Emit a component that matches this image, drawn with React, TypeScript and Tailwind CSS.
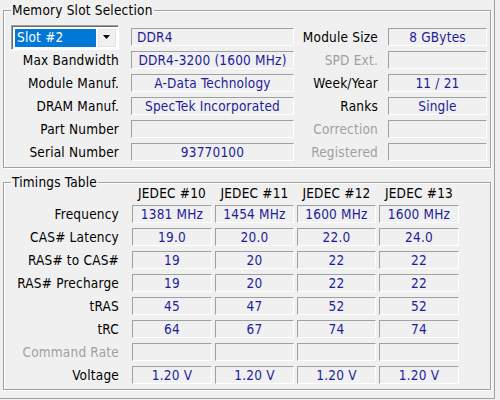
import React from "react";

const FONT = "[font-family:'DejaVu_Sans_Condensed','Liberation_Sans',sans-serif]";

type Slot = { label: string; value?: string; disabled?: boolean; align?: "left" | "center" };

const LEFT_ROWS: Slot[] = [
  { label: "", value: "DDR4", align: "left" },
  { label: "Max Bandwidth", value: "DDR4-3200 (1600 MHz)" },
  { label: "Module Manuf.", value: "A-Data Technology" },
  { label: "DRAM Manuf.", value: "SpecTek Incorporated" },
  { label: "Part Number", value: "" },
  { label: "Serial Number", value: "93770100" },
];

const RIGHT_ROWS: Slot[] = [
  { label: "Module Size", value: "8 GBytes" },
  { label: "SPD Ext.", value: "", disabled: true },
  { label: "Week/Year", value: "11 / 21" },
  { label: "Ranks", value: "Single" },
  { label: "Correction", value: "", disabled: true },
  { label: "Registered", value: "", disabled: true },
];

const COLUMNS = ["JEDEC #10", "JEDEC #11", "JEDEC #12", "JEDEC #13"];
const COL_W = ["w-[80px]", "w-[79px]", "w-[79px]", "w-[80px]"];

const TIMINGS: { label: string; values: string[]; disabled?: boolean }[] = [
  { label: "Frequency", values: ["1381 MHz", "1454 MHz", "1600 MHz", "1600 MHz"] },
  { label: "CAS# Latency", values: ["19.0", "20.0", "22.0", "24.0"] },
  { label: "RAS# to CAS#", values: ["19", "20", "22", "22"] },
  { label: "RAS# Precharge", values: ["19", "20", "22", "22"] },
  { label: "tRAS", values: ["45", "47", "52", "52"] },
  { label: "tRC", values: ["64", "67", "74", "74"] },
  { label: "Command Rate", values: ["", "", "", ""], disabled: true },
  { label: "Voltage", values: ["1.20 V", "1.20 V", "1.20 V", "1.20 V"] },
];

function Field({ value, className = "", left }: { value?: string; className?: string; left?: boolean }) {
  return (
    <div
      className={`flex h-[18px] items-center overflow-hidden whitespace-nowrap border-t border-l border-b border-r border-t-[#a0a0a0] border-l-[#a0a0a0] border-b-white border-r-white pt-[2px] text-[#1d1d9b] ${
        left ? "justify-start pl-[5px]" : "justify-center"
      } ${className}`}
    >
      {value}
    </div>
  );
}

function GroupBox({ title, className = "", children }: { title: string; className?: string; children: React.ReactNode }) {
  return (
    <div
      className={`relative border border-[#a0a0a0] shadow-[inset_1px_1px_0_#ffffff,1px_1px_0_#ffffff] ${className}`}
    >
      <span className="absolute -top-[9px] left-[7px] bg-[#f0f0f0] px-[1px] leading-[16px] text-black">{title}</span>
      {children}
    </div>
  );
}

function SlotSelect() {
  return (
    <div className="flex h-[25px] w-[110px] border-t border-l border-b border-r border-t-[#a0a0a0] border-l-[#a0a0a0] border-b-white border-r-white">
      <div className="flex flex-1 border-t border-l border-t-[#696969] border-l-[#696969] bg-white p-[2px]">
        <div className="flex flex-1 items-center bg-[#0078d7] pl-[2px] pt-[1px] text-white">Slot #2</div>
        <div className="ml-[2px] flex w-[18px] items-center justify-center border border-[#e3e3e3] bg-[#f0f0f0]">
          <svg width="8" height="5" viewBox="0 0 8 5">
            <path d="M0 0h7L3.5 4z" fill="#000" />
          </svg>
        </div>
      </div>
    </div>
  );
}

export default function App() {
  return (
    <div className={`h-[400px] w-[500px] bg-[#f0f0f0] text-[13.5px] leading-none tracking-[0.2px] ${FONT}`}>
      <div className="flex h-[399px] w-[495px] flex-col border-r border-b border-[#a0a0a0] pl-[3px] pt-[10px]">
        <GroupBox title="Memory Slot Selection" className="h-[158px] w-[488px] pl-[7px] pt-[17px]">
          <div className="flex flex-col gap-[5px]">
            {LEFT_ROWS.map((row, i) => {
              const right = RIGHT_ROWS[i];
              return (
                <div key={i} className="flex h-[18px] items-center">
                  <div className="flex w-[110px] items-center justify-end pr-[2px]">
                    {i === 0 ? <SlotSelect /> : <span className="pt-[2px] text-black">{row.label}</span>}
                  </div>
                  <Field value={row.value} left={row.align === "left"} className="ml-[10px] w-[163px]" />
                  <div className={`w-[84px] pt-[2px] text-right ${right.disabled ? "text-[#a0a0a0]" : "text-black"}`}>
                    {right.label}
                  </div>
                  <Field value={right.value} className="ml-[10px] w-[99px]" />
                </div>
              );
            })}
          </div>
        </GroupBox>

        <GroupBox title="Timings Table" className="mt-[14px] h-[208px] w-[488px] pt-[2px]">
          <div className="flex h-[16px] items-center pl-[128px] pt-[2px]">
            {COLUMNS.map((c, i) => (
              <div key={c} className={`${COL_W[i]} ${i > 0 ? "ml-[3px]" : ""} text-center text-black`}>
                {c}
              </div>
            ))}
          </div>
          <div className="mt-[4px] flex flex-col gap-[5px]">
            {TIMINGS.map((row) => (
              <div key={row.label} className="flex h-[18px] items-center">
                <div className={`w-[115px] pt-[2px] text-right ${row.disabled ? "text-[#a0a0a0]" : "text-black"}`}>
                  {row.label}
                </div>
                <div className="ml-[13px] flex gap-[3px]">
                  {row.values.map((v, i) => (
                    <Field key={i} value={v} className={COL_W[i]} />
                  ))}
                </div>
              </div>
            ))}
          </div>
        </GroupBox>
      </div>
    </div>
  );
}
